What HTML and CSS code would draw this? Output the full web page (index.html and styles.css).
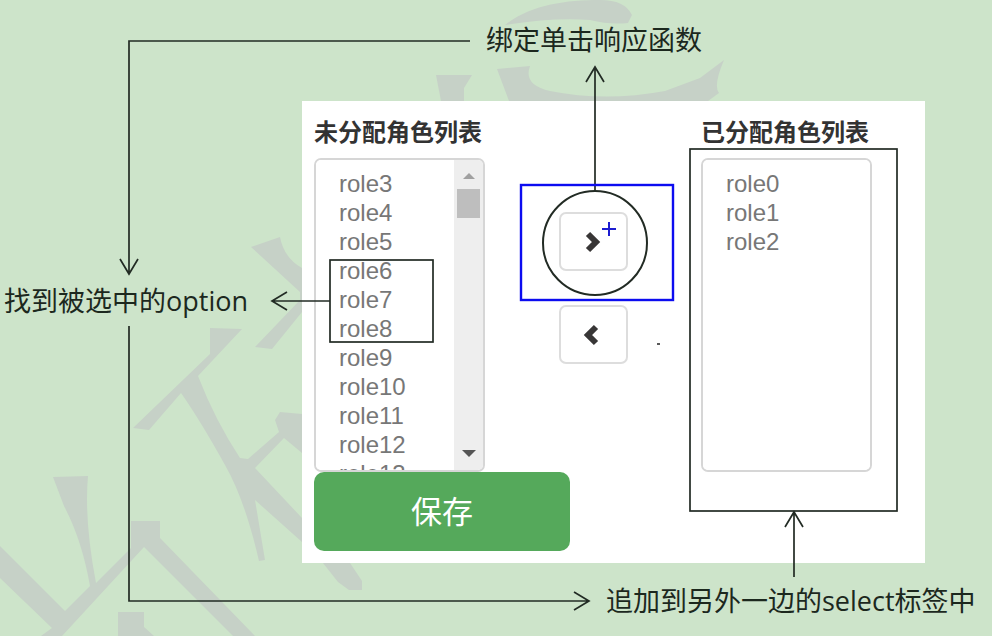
FILE: index.html
```html
<!DOCTYPE html>
<html lang="zh-CN">
<head>
<meta charset="utf-8">
<meta name="viewport" content="width=device-width, initial-scale=1">
<title>角色分配</title>
<link rel="stylesheet" href="styles.css">
</head>
<body>
<main class="diagram">
  <svg class="layer watermark" aria-hidden="true">
    <g fill="#c6d1c7">
      <path d="M0 546L65 611L90 586Q82 540 64 506L53 477L88 476Q84 520 96 583L131 548V521H160V538L255 636H233L144 547L62 636H41L52 628L0 578Z"/>
      <path d="M210 328L242 329L198 376Q215 420 240 458L248 459L279 432L275 420L280 412L302 414V453L284 438L255 468L302 518V542L255 500Q260 530 265 560L259 561Q245 500 225 465Q200 420 181 393L149 430L133 428L210 354Z"/>
      <path d="M251 247L280 237Q284 258 302 268V312L272 349L255 347L300 300V292Z"/>
      <path d="M118 612H144V627L154 636H118Z"/>
      <path d="M436 75H472L464 88V101H441Z"/>
      <path d="M505 25C530 5 565 0 600 0Q625 0 632 15L628 23Q610 25 590 20Q555 17 505 25Z"/>
      <path d="M497 69L530 66Q523 85 550 91Q605 102 665 91L700 78L724 60Q713 86 719 93L708 101H509Z"/>
      <path d="M323 563H350L362 581V590H349L338 582Z"/>
    </g>
  </svg>

  <p class="note note-top">绑定单击响应函数</p>
  <p class="note note-left">找到被选中的option</p>

  <form class="card">
    <div class="field">
      <label for="unassigned">未分配角色列表</label>
      <div class="list">
        <select id="unassigned" multiple>
          <option>role3</option>
          <option>role4</option>
          <option>role5</option>
          <option>role6</option>
          <option>role7</option>
          <option>role8</option>
          <option>role9</option>
          <option>role10</option>
          <option>role11</option>
          <option>role12</option>
          <option>role13</option>
        </select>
        <div class="scrollbar" aria-hidden="true">
          <svg width="12" height="7" viewBox="0 0 12 7"><path d="M0 7L6 1L12 7Z" fill="#a0a0a0"/></svg>
          <span class="thumb"></span>
          <svg class="down" width="14" height="8" viewBox="0 0 14 8"><path d="M0 0L7 7L14 0Z" fill="#555"/></svg>
        </div>
      </div>
    </div>
    <div class="moves">
      <button type="button" aria-label="分配">
        <svg width="20" height="24" viewBox="0 0 20 24"><path d="M5 4L13 12L5 20" fill="none" stroke="#383636" stroke-width="6"/></svg>
      </button>
      <button type="button" aria-label="取消分配">
        <svg width="20" height="24" viewBox="0 0 20 24"><path d="M13 4L5 12L13 20" fill="none" stroke="#383636" stroke-width="6"/></svg>
      </button>
    </div>
    <div class="field">
      <label for="assigned">已分配角色列表</label>
      <div class="list">
        <select id="assigned" multiple>
          <option>role0</option>
          <option>role1</option>
          <option>role2</option>
        </select>
      </div>
    </div>
    <button class="save" type="submit">保存</button>
  </form>

  <p class="note note-bottom">追加到另外一边的select标签中</p>

  <svg class="layer marks" aria-hidden="true">
    <g fill="none" stroke="#222b24" stroke-width="1.7">
      <path d="M470 41H129V273M120 259L129 274L138 259"/>
      <path d="M129 326V601H588M574 592L589 601L574 610"/>
      <path d="M330 301H273M287 292L272 301L287 310"/>
      <path d="M595 190V68M586 82L595 67L604 82"/>
      <path d="M794 577V513M785 527L794 512L803 527"/>
      <rect x="330" y="260" width="103" height="82"/>
      <rect x="690" y="149" width="207" height="362"/>
      <circle cx="595" cy="243" r="52" stroke-width="2"/>
    </g>
    <rect x="521" y="185" width="152" height="115" fill="none" stroke="#0c0cf0" stroke-width="2.4"/>
    <path d="M602 229H616M609 222V236" stroke="#1c1cd0" stroke-width="2"/>
    <path d="M657 344H660" stroke="#222" stroke-width="1.5"/>
  </svg>
</main>
</body>
</html>
```
FILE: styles.css
```css
* {
  box-sizing: border-box;
}

body {
  margin: 0;
  background: #cde4ca;
  font-family: "Liberation Sans", "Noto Sans CJK SC", sans-serif;
}

.diagram {
  position: relative;
  display: grid;
  grid-template-columns: 302px minmax(0, 1fr) 67px;
  grid-template-rows: 101px auto 1fr;
  min-height: 100vh;
  overflow: hidden;
}

.layer {
  position: absolute;
  inset: 0;
  width: 100%;
  height: 100%;
  pointer-events: none;
}

.marks {
  z-index: 2;
}

.note {
  position: relative;
  margin: 0;
  color: #1c281e;
  font-family: "Open Sans", "Noto Sans CJK SC", sans-serif;
  font-size: 27px;
  line-height: 40px;
  white-space: nowrap;
}

.note-top {
  grid-area: 1 / 2;
  padding: 20px 0 0 184px;
}

.note-left {
  grid-area: 2 / 1;
  padding: 180px 0 0 4px;
}

.note-bottom {
  grid-area: 3 / 2 / 4 / 4;
  padding: 18px 0 0 304px;
}

.card {
  position: relative;
  grid-area: 2 / 2;
  display: grid;
  grid-template-columns: 171px 1fr 171px;
  padding: 12px 53px 12px 12px;
  background: #fff;
}

.field label {
  display: block;
  height: 45px;
  color: #333;
  font-size: 24px;
  font-weight: 700;
  line-height: 40px;
  white-space: nowrap;
}

.list {
  display: flex;
  height: 314px;
  overflow: hidden;
  border: 2px solid #d6d6d6;
  border-radius: 7px;
}

.list select {
  flex: 1;
  min-width: 0;
  height: 100%;
  margin: 0;
  padding: 10px 0 0 23px;
  border: 0;
  outline: 0;
  background: #fff;
  color: #777;
  font: 24px/29px "Liberation Sans", sans-serif;
  overflow: hidden;
  scrollbar-width: none;
}

.list option {
  height: 29px;
  min-height: 29px;
  padding: 0;
  line-height: 29px;
}

.scrollbar {
  display: flex;
  flex-direction: column;
  align-items: center;
  width: 29px;
  padding: 12px 0;
  background: #eee;
}

.thumb {
  width: 23px;
  height: 29px;
  margin-top: 10px;
  background: #bebebe;
}

.down {
  margin-top: auto;
}

.moves {
  display: flex;
  flex-direction: column;
  align-items: center;
  gap: 34px;
  padding-top: 99px;
}

.moves button {
  display: grid;
  place-items: center;
  width: 69px;
  height: 59px;
  padding: 0;
  border: 2px solid #ddd;
  border-radius: 7px;
  background: #fff;
}

.save {
  grid-column: 1 / 3;
  width: 256px;
  height: 79px;
  padding: 0 0 4px;
  border: 0;
  border-radius: 10px;
  background: #55a95b;
  color: #fff;
  font: 31px "Noto Sans CJK SC", sans-serif;
}
```
